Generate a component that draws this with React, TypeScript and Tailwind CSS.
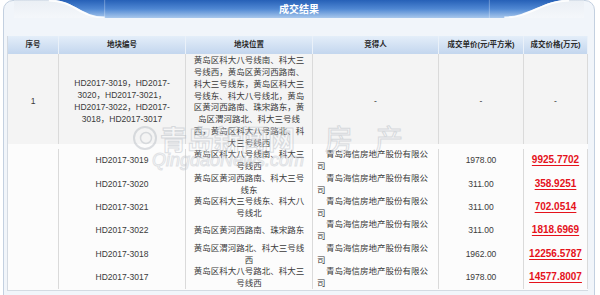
import React from "react";

const subRows = [
  { hd: "HD2017-3019", loc: ["黄岛区科大八号线南、科大三", "号线西"], unit: "1978.00", total: "9925.7702" },
  { hd: "HD2017-3020", loc: ["黄岛区黄河西路南、科大三号", "线东"], unit: "311.00", total: "358.9251" },
  { hd: "HD2017-3021", loc: ["黄岛区科大三号线东、科大八", "号线北"], unit: "311.00", total: "702.0514" },
  { hd: "HD2017-3022", loc: ["黄岛区黄河西路南、珠宋路东"], unit: "311.00", total: "1818.6969" },
  { hd: "HD2017-3018", loc: ["黄岛区渭河路北、科大三号线", "西"], unit: "1962.00", total: "12256.5787" },
  { hd: "HD2017-3017", loc: ["黄岛区科大八号路北、科大三", "号线西"], unit: "1978.00", total: "14577.8007" },
];

const row1Loc = [
  "黄岛区科大八号线南、科大三",
  "号线西，黄岛区黄河西路南、",
  "科大三号线东，黄岛区科大三",
  "号线东、科大八号线北，黄岛",
  "区黄河西路南、珠宋路东，黄",
  "岛区渭河路北、科大三号线",
  "西，黄岛区科大八号路北、科",
  "大三号线西",
];

const row1Hd = ["HD2017-3019，HD2017-", "3020，HD2017-3021，", "HD2017-3022，HD2017-", "3018，HD2017-3017"];

const cell = "shrink-0 border-r border-[#dadada] flex flex-col items-center justify-center text-center";
const hcell = "shrink-0 border-r border-[#eaf1f9] flex items-center justify-center whitespace-nowrap";

export default function App() {
  return (
    <div className="relative w-[600px] h-[295px] overflow-hidden bg-white font-['Liberation_Sans','Noto_Sans_CJK_SC',sans-serif] text-[#3a3a3a]">
      <div className="ml-[3px] w-[592px] h-[320px] border border-[#c3d0e0] rounded-t-[10px] bg-[#f1f5fa]">
        <div className="relative -mt-px h-[18px] flex items-center justify-center">
          <svg className="absolute inset-0 w-full h-full" viewBox="0 0 592 18" preserveAspectRatio="none">
            <defs>
              <linearGradient id="bandG" x1="0" y1="0" x2="0" y2="1">
                <stop offset="0" stopColor="#2660b7" />
                <stop offset="0.5" stopColor="#5088d3" />
                <stop offset="1" stopColor="#a9c8ec" />
              </linearGradient>
              <linearGradient id="sideG" x1="0" y1="0" x2="0" y2="1">
                <stop offset="0" stopColor="#e6ebf1" />
                <stop offset="1" stopColor="#f6f8fb" />
              </linearGradient>
            </defs>
            <path d="M10 0 L582 0 L582 18 L10 18 Z" fill="url(#sideG)" opacity="0.6" />
            <path d="M47 0 C72 0 78 18 103 18 L500 18 C525 18 540 0 565 0 Z" fill="url(#bandG)" />
            <path d="M45 0.5 C70 0.5 76 17.5 101 17.5" stroke="#ffffff" strokeWidth="2" fill="none" opacity="0.9" />
            <path d="M502 17.5 C527 17.5 542 0.5 567 0.5" stroke="#ffffff" strokeWidth="2" fill="none" opacity="0.9" />
            <line x1="101" y1="0" x2="101" y2="18" stroke="#ffffff" strokeOpacity="0.3" />
            <line x1="487" y1="0" x2="487" y2="18" stroke="#ffffff" strokeOpacity="0.3" />
          </svg>
          <span className="relative text-[10px] font-bold text-white leading-none font-['Noto_Sans_CJK_SC',sans-serif]">成交结果</span>
        </div>

        <div className="ml-[3px] mt-[18px] w-[581px] border-l border-b border-[#d4dae2]">
          <div className="flex h-[18px] bg-linear-to-b from-[#e4eef9] to-[#c3d6ee] text-[7.5px] font-bold text-[#2a2a2a]">
            <div className={`${hcell} w-[51px]`}>序号</div>
            <div className={`${hcell} w-[127px]`}>地块编号</div>
            <div className={`${hcell} w-[127px]`}>地块位置</div>
            <div className={`${hcell} w-[126px]`}>竞得人</div>
            <div className={`${hcell} w-[85px]`}>成交单价(元/平方米)</div>
            <div className={`${hcell} w-[64px]`}>成交价格(万元)</div>
          </div>

          <div className="flex h-[90px] bg-[#f4f4f4] text-[8.5px]">
            <div className={`${cell} w-[51px] pt-[4px]`}>1</div>
            <div className={`${cell} w-[127px] pt-[4px] leading-[12px]`}>
              {row1Hd.map((l) => (
                <div key={l} className="whitespace-nowrap">{l}</div>
              ))}
            </div>
            <div className={`${cell} w-[127px] !justify-start pt-[1px] leading-[11.85px]`}>
              {row1Loc.map((l) => (
                <div key={l} className="whitespace-nowrap">{l}</div>
              ))}
            </div>
            <div className={`${cell} w-[126px] pt-[4px]`}>-</div>
            <div className={`${cell} w-[85px] pt-[4px]`}>-</div>
            <div className={`${cell} w-[64px] pt-[4px]`}>-</div>
          </div>

          {subRows.map((r, i) => {
            const h =
              i === 0 ? "h-[27.9px] pt-[4.5px]" : i === subRows.length - 1 ? "h-[24.9px] pb-[1.5px]" : "h-[23.4px]";
            return (
              <div key={r.hd} className={`flex bg-[#fcfcfc] text-[8.5px] leading-[12px] ${h}`}>
                <div className={`${cell} w-[51px]`}></div>
                <div className={`${cell} w-[127px]`}>{r.hd}</div>
                <div className={`${cell} w-[127px]`}>
                  {r.loc.map((l) => (
                    <div key={l} className="whitespace-nowrap">{l}</div>
                  ))}
                </div>
                <div className={`${cell} w-[126px] !items-start pl-[4px]`}>
                  <div className="whitespace-nowrap pl-[9px]">青岛海信房地产股份有限公</div>
                  <div className="whitespace-nowrap">司</div>
                </div>
                <div className={`${cell} w-[85px]`}>{r.unit}</div>
                <div className={`${cell} w-[64px]`}>
                  <span className="text-[10px] font-bold text-[#e5121b] underline underline-offset-[1.5px] whitespace-nowrap">
                    {r.total}
                  </span>
                </div>
              </div>
            );
          })}
        </div>
      </div>

      <div className="pointer-events-none absolute left-[132px] top-[124px] opacity-40">
        <div className="flex items-center">
          <svg width="26" height="26" viewBox="0 0 26 26" className="mr-[2px]">
            <circle cx="13" cy="13" r="11" fill="none" stroke="#aab1ba" strokeWidth="2" />
            <circle cx="14" cy="13" r="5.5" fill="none" stroke="#aab1ba" strokeWidth="1.5" />
          </svg>
          <span className="text-[27px] font-bold leading-none text-[#fafafa] [-webkit-text-stroke:1px_#aab1ba] font-['Noto_Sans_CJK_SC',sans-serif]">
            青岛新闻网
          </span>
          <span className="ml-[30px] text-[28px] leading-none tracking-[22px] text-[#fafafa] [-webkit-text-stroke:1px_#aab1ba] font-['Noto_Sans_CJK_SC',sans-serif]">
            房产
          </span>
        </div>
        <div className="ml-[20px] -mt-[1px] text-[18px] italic leading-none text-[#fafafa] [-webkit-text-stroke:1px_#b5bbc3] font-['Liberation_Sans',sans-serif]">
          QingdaoNews.com
        </div>
      </div>
    </div>
  );
}
